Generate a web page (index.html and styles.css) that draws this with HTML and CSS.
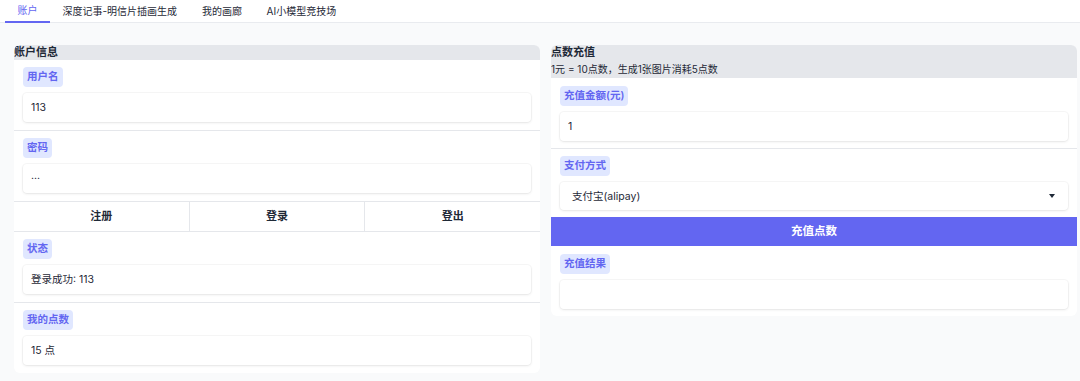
FILE: index.html
```html
<!DOCTYPE html>
<html lang="zh">
<head>
<meta charset="utf-8">
<link rel="stylesheet" href="styles.css">
</head>
<body>
<nav class="tabs">
  <div class="tab active">账户</div>
  <div class="tab">深度记事-明信片插画生成</div>
  <div class="tab">我的画廊</div>
  <div class="tab">AI小模型竞技场</div>
</nav>
<main class="cols">
  <section class="panel">
    <div class="head"><div class="title">账户信息</div></div>
    <div class="body">
      <div class="field">
        <span class="label">用户名</span>
        <div class="box">113</div>
      </div>
      <div class="field">
        <span class="label">密码</span>
        <div class="box">···</div>
      </div>
      <div class="btns">
        <div class="btn">注册</div>
        <div class="btn">登录</div>
        <div class="btn">登出</div>
      </div>
      <div class="field">
        <span class="label">状态</span>
        <div class="box">登录成功: 113</div>
      </div>
      <div class="field last">
        <span class="label">我的点数</span>
        <div class="box">15 点</div>
      </div>
    </div>
  </section>
  <section class="panel">
    <div class="head two">
      <div class="title">点数充值</div>
      <div class="sub">1元 = 10点数，生成1张图片消耗5点数</div>
    </div>
    <div class="body">
      <div class="field first">
        <span class="label">充值金额(元)</span>
        <div class="box">1</div>
      </div>
      <div class="field nodiv">
        <span class="label">支付方式</span>
        <div class="box select"><span class="sel-text">支付宝(alipay)</span><span class="caret"></span></div>
      </div>
      <div class="primary">充值点数</div>
      <div class="field last rlast">
        <span class="label">充值结果</span>
        <div class="box"></div>
      </div>
    </div>
  </section>
</main>
</body>
</html>
```
FILE: styles.css
```css
* { box-sizing: border-box; }
html, body { margin: 0; padding: 0; }
body {
  background: #f9fafb;
  font-family: Inter, "Noto Sans CJK SC", sans-serif;
  color: #1f2937;
  width: 1080px;
  height: 381px;
  overflow: hidden;
}
.tabs {
  display: flex;
  height: 23px;
  padding-left: 5px;
  border-bottom: 1px solid #e9ebef;
  background: #fff;
}
.tab {
  font-size: 10px;
  line-height: 22px;
  padding: 0 12px 0 12.5px;
  color: #1f2937;
}
.tab:nth-child(2) { padding: 0 12.5px 0 13px; }
.tab.active {
  color: #6366f1;
  border-bottom: 2px solid #6366f1;
  line-height: 20px;
  margin-bottom: -1px;
}
.cols {
  display: flex;
  gap: 11px;
  padding: 22px 3px 0 14px;
  align-items: flex-start;
}
.panel {
  flex: 1;
  background: #fff;
  border-radius: 6px;
  overflow: hidden;
}
.head {
  background: #e5e7eb;
  padding: 0 0 1px 0;
  display: flex;
  flex-direction: column;
  gap: 1px;
}
.head.two { padding-bottom: 0; }
.title {
  font-size: 11px;
  font-weight: 700;
  line-height: 14px;
  color: #1f2937;
}
.head.two .title { line-height: 15px; }
.sub {
  font-size: 10px;
  line-height: 17px;
  color: #1f2937;
}
.body { display: flex; flex-direction: column; }
.field {
  display: flex;
  flex-direction: column;
  align-items: stretch;
  padding: 7px 9px 8px 9px;
  border-bottom: 1px solid #e5e7eb;
}
.field.first { padding-top: 8px; padding-bottom: 7px; }
.field.nodiv { border-bottom: none; padding-bottom: 7px; }
.field.last { border-bottom: none; }
.field.rlast { padding-top: 8px; padding-bottom: 7px; }
.label {
  align-self: flex-start;
  display: block;
  background: #e0e7ff;
  color: #6366f1;
  font-size: 10.5px;
  font-weight: 600;
  line-height: 20px;
  height: 20px;
  padding: 0 4px;
  border-radius: 4px;
}
.box {
  margin-top: 6px;
  height: 29px;
  background: #fff;
  border-radius: 4px;
  box-shadow: 0 0 0 1px rgba(0,0,0,0.03), 0 1px 3px rgba(0,0,0,0.08);
  font-size: 10.5px;
  line-height: 29px;
  padding: 0 8px;
  color: #1f2937;
}
.select {
  display: flex;
  justify-content: space-between;
  align-items: center;
  height: 28px;
  padding: 0 13px 0 12px;
}
.caret {
  width: 0; height: 0;
  border-left: 3.5px solid transparent;
  border-right: 3.5px solid transparent;
  border-top: 4px solid #1f2937;
}
.btns {
  display: flex;
  border-top: 1px solid #e5e7eb;
  border-bottom: 1px solid #e5e7eb;
  margin-top: -1px;
}
.btn {
  flex: 1;
  height: 29px;
  line-height: 29px;
  text-align: center;
  font-size: 11px;
  font-weight: 700;
  color: #1f2937;
  border-right: 1px solid #e5e7eb;
}
.btn:last-child { border-right: none; }
.primary {
  height: 29px;
  line-height: 29px;
  background: #6366f1;
  color: #fff;
  text-align: center;
  font-size: 11.5px;
  font-weight: 700;
}
```
